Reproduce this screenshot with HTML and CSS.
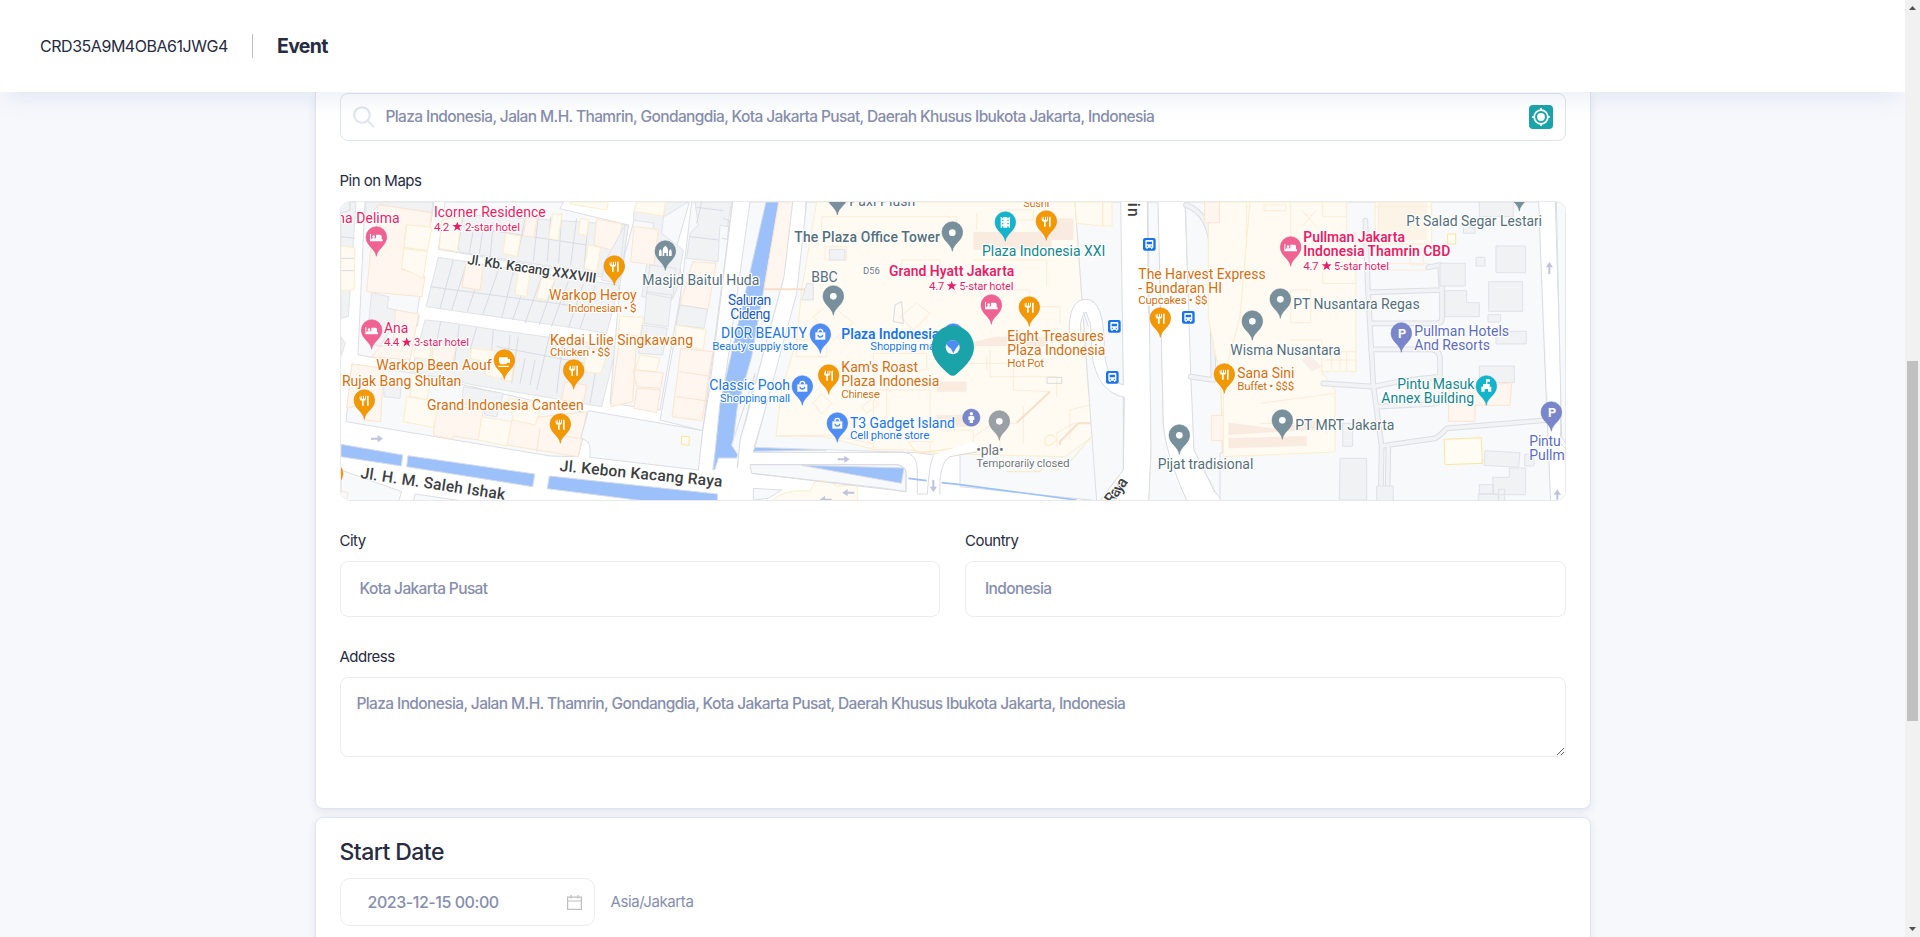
FILE: index.html
```html
<!DOCTYPE html>
<html lang="en">
<head>
<meta charset="utf-8">
<title>Event</title>
<link rel="stylesheet" href="styles.css">
</head>
<body>
<div class="page">
  <header class="topbar">
    <span class="code">CRD35A9M4OBA61JWG4</span>
    <span class="divider"></span>
    <h1 class="title">Event</h1>
  </header>
  <main class="content">
    <section class="card card-location">
      <div class="search">
        <svg class="search-icon" viewBox="0 0 22 22"><circle cx="9" cy="9" r="7.8"/><path d="M14.8 14.8L20.4 20.6"/></svg>
        <span class="value search-value">Plaza Indonesia, Jalan M.H. Thamrin, Gondangdia, Kota Jakarta Pusat, Daerah Khusus Ibukota Jakarta, Indonesia</span>
        <button class="locate" aria-label="Locate"><svg viewBox="0 0 24 24"><circle cx="12" cy="12" r="6.8"/><circle class="dot" cx="12" cy="12" r="3.9"/><path d="M12 3v3M12 18v3M3 12h3M18 12h3"/></svg></button>
      </div>
      <label class="label label-map">Pin on Maps</label>
      <div class="map">
<svg class="map-svg" viewBox="33 36 3672 894" preserveAspectRatio="none">
<defs>
  <path id="pin" d="M0 58C-3 34-31 27-31 0A31 31 0 1 1 31 0C31 27 3 34 0 58Z"/>
  <g id="food"><path d="M-14-15v9q0 6 6 6h1v15h5V0h1q6 0 6-6v-9h-3v9h-3v-9h-3v9h-4v-9h-3v9zM9-15q-1 0-1 3V15h5v-30z"/></g>
  <g id="bed"><path d="M-19-12h3V4h32v-9q0-5-5-5H-1V1h-13v8h-5zM16 4h3v6h-38V3z"/><circle cx="-8" cy="-4" r="4"/></g>
  <circle id="dot" r="10"/>
  <g id="bag"><path d="M-15-7h30v22h-30z"/><path class="bag-line" d="M-7-7v-2a7 7 0 0 1 14 0v2" stroke="#fff"/><path class="bag-line" d="M-7 0a7 7 0 0 0 14 0" stroke="#4f8df5"/></g>
  <g id="bus"><rect class="bus-bg" x="-19" y="-19" width="38" height="38" rx="6"/><path d="M-12-10q0-3 3-3H9q3 0 3 3V10H9v4H5v-4H-5v4h-4v-4h-3z"/><path class="bus-bg" d="M-8-8H8V0H-8zM-8 4h4v3h-4zM4 4h4v3H4z"/></g>
  <path id="star" d="M0-15L4-5 15-5 6 2 10 13 0 6-10 13-6 2-15-5-4-5Z"/>
  <path id="arrow" d="M-18-3H2v-8L18 0 2 11V3h-20z"/>
</defs>
<rect class="road" x="0" y="0" width="3800" height="960"/>

<!-- west quarter -->
<g>
  <path class="grey" d="M33 36H78L55 380 33 385zM33 440L46 460 33 500z"/>
  <path class="cream" d="M33 168L75 174 72 300 33 302z"/>
  <path class="edge" d="M33 205H73M33 242H70M33 140L76 145M33 70L60 60V36"/>
  <path class="land" d="M105 36H312L238 525 84 494z"/>
  <path class="grey" d="M108 36H310L304 68 145 44 105 100zM125 308L176 320 172 354 268 375 262 410 190 405 150 470 110 455z"/>
  <path class="peach" d="M145 44L304 68 300 125 228 112 216 238 285 260 276 320 110 305 125 150 138 120zM196 360L266 372 240 510 125 500 150 470 190 462z"/>
  <path class="cream" d="M230 104L306 112 292 182 222 172zM222 176L292 184 280 265 214 234z"/>
  <path class="land" d="M345 36H700L690 56 895 105 872 270 325 178z"/>
  <path class="grey" d="M345 70L895 105 872 262 390 186z"/>
  <path class="edge" d="M400 75L382 185M430 120L418 188M458 125L448 192M490 100L480 205M545 100L525 190M585 90L562 200M625 80L610 215M662 80L652 215M695 70L686 220M740 85L722 225M775 90L762 232M340 100L770 165"/>
  <path class="cream" d="M335 90L395 80 382 184 328 175zM528 130L572 138 562 200 518 190zM668 70L696 74 684 150 656 145zM752 85L776 90 770 136 745 132zM775 165L812 172 800 245 762 235zM720 36H835L830 60 720 42z"/>
  <path class="peach" d="M588 80L622 84 612 142 580 138zM800 88L875 100 866 186 792 165z"/>
  <path class="grey" d="M325 202L868 286 830 430 720 412 288 350z"/>
  <path class="edge" d="M370 210L330 355M410 220L365 360M458 230L412 365M505 240L458 375M550 245L515 385M595 255L548 390M635 260L585 400M675 270L628 405M715 275L664 410M760 282L716 412M795 288L750 415M300 290L840 362"/>
  <path class="cream" d="M565 245L600 250 590 320 555 312zM635 262L675 268 650 330 620 325z"/>
  <path class="peach" d="M408 218L460 228 450 300 396 292z"/>
  <path class="grey" d="M285 390L340 395 500 420 860 470 815 650 430 585 244 545z"/>
  <path class="edge" d="M332 395L305 530M388 405L370 540M440 412L420 480M490 420L480 540M540 435L530 560M565 440L545 580M585 505L570 580M615 510L600 585M660 430L620 600M700 440L680 610M740 520L700 620M780 460L760 560M810 470L780 640M500 470L820 530"/>
  <path class="cream" d="M262 445L305 450 298 510 250 500zM425 475L515 485 520 568 465 555 470 515 420 505zM770 475L835 485 812 550 760 545z"/>
  <path class="peach" d="M308 455L380 462 362 540 305 530zM705 575L770 585 760 640 695 630zM520 530L550 535 545 575 515 570z"/>
  <path class="land" d="M66 522L240 548 776 670 745 800 660 798 48 695z"/>
  <path class="peach" d="M66 522L160 535 152 695 102 690 104 640 50 655zM320 640L460 660 445 750 370 738 368 748 310 735zM545 690L770 665 745 800 530 765z"/>
  <path class="grey" d="M160 560L215 570 210 625 162 620zM400 590L520 610 500 680 465 675 460 655 395 640z"/>
  <path class="cream" d="M245 550L300 562 292 628 240 620zM230 620L330 635 310 712 220 695zM455 680L545 695 530 768 445 750zM535 625L635 640 615 705 550 690z"/>
  <path class="edge-warm" d="M630 715L620 785M700 640L690 735 745 745M560 650L600 660"/>
  <path class="grey" d="M885 105L865 280 815 270 822 220z"/>
  <path class="land" d="M775 662L1120 722 1106 840 780 802V775Q780 752 752 745z"/>
  <path class="land" d="M33 840L215 905 205 936H33zM255 912L420 936H250z"/>
  <path class="water" d="M33 763L218 795 214 828 33 800zM234 797L614 852 608 890 230 830zM658 858L1162 912V940H1000L652 896z"/>
  <path class="edge-warm" d="M33 903L54 908 50 936"/>
</g>

<!-- Cideng canal and the blocks beside it -->
<g transform="translate(930 0)">
  <path class="land" d="M-10 36H148L110 170 128 280 60 660-90 640-60 280-45 190-20 100z"/>
  <path class="grey" d="M-18 60L76 78 145 36H75L65 130 130 180 110 300 95 330 5 320 20 225 42 100-20 90z"/>
  <path class="cream" d="M-10 36H76L70 78-18 64zM-60 378L10 382 0 440-65 430zM0 495L60 505 48 545-15 540z"/>
  <path class="peach" d="M-18 110L55 118 42 225-28 215zM-60 435L-10 445-22 635-88 650zM-20 540L70 548 62 595-10 590zM-10 595L62 600 50 668-18 655z"/>
  <path class="grey" d="M30 225L108 235 98 325 20 310zM20 305L95 315 84 410 12 400zM8 405L82 415 68 495-5 490z"/>
  <path class="land" d="M155 36H278L188 722 60 690 110 415z"/>
  <path class="grey" d="M165 36H275L262 110 240 105 234 215 140 205 150 130 175 105z"/>
  <path class="edge" d="M170 52L250 62M150 140L236 150M185 36L170 100M250 85L268 92 262 148 245 145"/>
  <path class="peach" d="M158 215L228 220 204 358 120 345zM122 475L218 485 186 692 96 680 112 560z"/>
  <path class="edge-warm" d="M118 545L205 558M108 620L198 632"/>
  <path class="grey" d="M120 345L203 358 192 415 108 405z"/>
  <path class="cream" d="M108 405L198 420 190 478 106 465z"/>
  <path class="road" d="M278 36H380L245 722 220 845 172 838 208 600z"/>
  <path class="cream-y" d="M125 738L148 740 147 766 124 763z"/>
  <path class="edge" d="M278 36L208 600 188 722 175 840M334 36L218 840"/>
  <path class="land" d="M330 36H462L432 300 300 765 228 760z"/>
  <path class="water" d="M378 36H418L335 500 292 650 278 765 300 768 290 804H235L225 838 220 840 240 640z"/>
  <path class="land" d="M275 765L345 550 292 840 300 805z"/>
  <path class="peach" d="M416 36H470L435 297 372 298z"/>
  <path class="road" d="M458 36H530L475 300 343 770 340 785H790Q832 790 832 840V912H860L870 810 960 770V940H230L294 830 300 765 425 300z"/>
  <path class="edge" d="M458 36L432 260 300 750 292 833M498 36L482 300 343 770"/>
  <path class="land" d="M330 824H770Q798 828 798 850V905L720 893 335 850z"/>
  <path class="water" d="M485 826L792 834 784 880zM345 770L560 780 340 784z"/>
  <path class="land" d="M340 895L425 900 385 925 340 930z"/>
  <path class="cream" d="M390 936Q430 895 510 903L525 875Q560 865 590 888L652 885V936z"/>
</g>

<!-- Plaza Indonesia -->
<g transform="translate(930 0)">
  <path class="land" d="M500 36H1445L1452 880 1400 935 960 890V775L880 795 832 788 345 772 470 310z"/>
  <path class="cream" d="M530 36H1305L1345 600 1370 730 1275 800 1060 795 890 790 810 780 700 778 555 740 408 738 425 600 470 450 485 300z"/>
  <path class="peach-deep" d="M1000 126H1235V85H1300V150H1235V180H1000zM985 460L1065 440H1220V468H1010L980 520zM890 575H980V605H890zM890 675H985V710H890z"/>
  <path class="edge-peach" d="M545 80H950V130H545zM785 210H900V260H785zM555 170H620V210H555zM830 340L870 370 820 420 780 380zM520 380L570 340 640 400 580 450zM470 450H560V500H470zM700 490H860V540H700zM840 590H960M740 560V700M700 600H870V690H700zM520 640L545 610 575 640 545 672zM665 650L700 625 715 645 680 670zM410 738L560 735 700 760V778M1010 70V120M1080 60H1180V90H1080zM1000 210H1220V290M990 300H1170L1160 350H1260V400M1050 480V560H1250V620M980 520H1120V600L1230 605 1130 700H1060L1000 740M1250 770V730L1300 700H1340M1040 540V500M1150 650V760M1290 750V660L1370 640M905 720H1000V780M810 755H880M870 755V790M1080 710V790"/>
  <path class="edge-strong" d="M372 298H498M1260 765V755L1315 700H1365M1130 698L1230 605"/>
  <path class="edge-yellow" d="M1100 845H1200L1220 820 1250 840 1290 815 1355 740M805 755L830 790 940 775M1215 745Q1225 730 1240 738T1245 755Q1230 770 1215 765z"/>
  <path class="grey" d="M568 178H615V210H568zM500 280H520V330H485z"/>
  <path class="edge" d="M765 345L785 335 790 400 760 395zM1221 562H1265V580H1221z"/>
  <path class="road" d="M880 795Q860 820 862 912L900 915Q895 820 950 795L1010 780 1005 755 940 775z"/>
  <path class="edge" d="M880 797Q868 820 862 912H832V840Q832 790 790 787H340M900 915Q895 820 930 800L1015 785M330 824H770Q798 828 798 850V905L335 850"/>
  <path class="stream" d="M805 865L860 872M905 878L960 884 1310 930"/>
</g>

<!-- Thamrin boulevard and the roundabout spur -->
<g transform="translate(1860 0)">
  <path class="land" d="M375 36H520V935H440z"/>
  <path class="cream" d="M375 36H458V108L380 100zM458 36H486V108H458z"/>
  <path class="road" d="M510 36H592L592 360 605 480 600 700 603 790 595 936H450L520 840 523 622Q430 600 422 480L408 366 392 405V440L360 430Q355 325 410 328 462 330 465 470 470 575 520 585z"/>
  <path class="edge" d="M512 36L520 585Q465 570 463 470 462 330 410 328 355 325 358 430M400 366L415 410M392 460V400Q400 366 408 366L422 405 425 490Q440 605 523 622L520 840 450 932M592 36L595 360 607 440 603 790 597 936"/>
  <path class="land" d="M594 36H626L640 700 665 800 720 936H596L603 790z"/>
  <path class="road" d="M624 36H705L722 550 732 780 795 908 900 936H714L658 830 640 700z"/>
  <path class="edge" d="M624 36L640 700Q645 790 712 935M705 36L725 560 732 780 795 908 900 935"/>
  <path class="land" d="M706 36H770L810 430 820 936 795 905 732 780 722 550z"/>
  <path class="lane" d="M708 45Q780 70 785 180L790 570 722 560"/>
  <path class="lane-in" d="M708 45Q780 70 785 180L790 570 722 560"/>
  <path class="cream" d="M778 36H1225V390H1218V510L1060 570 1010 585V780L960 796H820L812 570 775 385V130z"/>
  <path class="peach" d="M764 36H808V98H764zM785 676H826V752H785z"/>
  <path class="edge-peach" d="M890 36V148H930M930 260V350M892 550V675H930M845 795H950M905 700H960V750"/>
</g>

<!-- east quarter -->
<g transform="translate(2790 0)">
  <path class="land" d="M0 36H846L875 936H-120V790L0 740z"/>
  <path class="cream" d="M-30 36H260V130H288V545H185L225 600V786L-110 800V570L-60 380z"/>
  <path class="cream" d="M345 36H515V162H345z"/>
  <path class="edge-peach" d="M12 45H78V62H12zM92 36V210M92 300H152V398H92zM188 36V80H258M188 210V280H288M90 450H185L185 545M125 60L170 110M125 110L170 60M195 485H288M195 510H288M215 485V540M240 485V540M260 485V540M0 640L225 610M0 700H200V730M355 36V160M345 50H515M375 220H505V240H375zM450 195H490V225H450z"/>
  <path class="fade" d="M355 36H500V150H355z"/>
  <path class="peach-deep" d="M-95 745L140 738V768L-95 775zM-95 698L40 715 180 690V718L-95 735z"/>
  <path class="facet" d="M125 510L150 495 185 530 155 545z"/>
  <path class="lane" d="M316 92L324 300 340 585 365 770M324 307L545 300 540 225 505 232M330 400H530Q546 400 546 385V290M332 478H515Q540 480 540 510V560L430 572 340 590 190 580M350 650L520 642Q545 638 545 615M365 768L525 745Q540 738 560 715L865 690M365 765L362 936M385 775L382 936"/>
  <path class="lane-in" d="M316 92L324 300 340 585 365 770M324 307L545 300 540 225 505 232M330 400H530Q546 400 546 385V290M332 478H515Q540 480 540 510V560L430 572 340 590 190 580M350 650L520 642Q545 638 545 615M365 768L525 745Q540 738 560 715L865 690M365 765L362 936M385 775L382 936"/>
  <path class="grey" d="M658 36H760V80H658zM540 220H616V288H540zM555 302H620V338H658V380H555zM648 202H675V228H648zM708 168H797V248H708zM686 275H788V364H686zM684 374H722V396H684zM708 424H799V462H708zM658 528H763V578H658zM610 110H645V130H610zM248 700H278V769H248zM240 805H320V930H238zM675 782L780 788 776 832 672 826zM748 834H797V914H700L698 862H748zM658 884H700V912H658zM655 912H716V936H655zM716 898H734V936H716zM794 793H822V828H794zM350 888H400V936H350z"/>
  <path class="cream-y" d="M563 132H587V162H563zM552 748L664 743 667 820 555 824z"/>
  <path class="peach" d="M568 600L755 578 750 646H645V694H565z"/>
  <path class="road" d="M836 36H886L900 400 915 850V936H872L862 600z"/>
  <path class="edge" d="M836 36L856 560 872 936M886 36L902 560V760L915 775"/>
  <path class="land" d="M889 36H925V775L905 740z"/>
</g>

<!-- one-way arrows -->
<g class="arrows">
  <use href="#arrow" x="141" y="746"/><use href="#arrow" x="1541" y="808"/>
  <use href="#arrow" transform="translate(1555 908) rotate(180)"/><use href="#arrow" transform="translate(1810 888) rotate(90)"/>
  <use href="#arrow" transform="translate(3658 234) rotate(-90)"/><use href="#arrow" transform="translate(3682 916) rotate(-90)"/>
  <use href="#arrow" transform="translate(1487 929) rotate(180)"/>
</g>

<!-- place pins -->
<g class="p-orange">
  <use href="#pin" x="853" y="228"/><use href="#pin" x="523" y="510"/><use href="#pin" x="731" y="540"/><use href="#pin" x="103" y="630"/><use href="#pin" x="691" y="702"/><use href="#pin" x="8" y="850"/>
  <use href="#pin" x="1496" y="555"/><use href="#pin" x="2149" y="93"/><use href="#pin" x="2098" y="351"/><use href="#pin" x="2491" y="384"/><use href="#pin" x="2683" y="552"/>
</g>
<g class="p-pink"><use href="#pin" x="139" y="141"/><use href="#pin" x="125" y="420"/><use href="#pin" x="1984" y="345"/><use href="#pin" x="2882" y="171"/></g>
<g class="p-slate"><use href="#pin" x="1006" y="183"/><use href="#pin" x="1510" y="318"/><use href="#pin" x="1867" y="126"/><use href="#pin" x="1522" y="17"/><use href="#pin" x="2767" y="393"/><use href="#pin" x="2548" y="735"/><use href="#pin" x="2851" y="327"/><use href="#pin" x="2857" y="690"/><use href="#pin" x="3568" y="5"/></g>
<g class="p-blue"><use href="#pin" x="1471" y="432"/><use href="#pin" x="1417" y="588"/><use href="#pin" x="1522" y="699"/><use href="#pin" x="1870" y="432"/></g>
<g class="p-teal"><use href="#pin" x="2026" y="96"/><use href="#pin" x="3469" y="588"/></g>
<g class="p-indigo"><use href="#pin" x="3214" y="429"/><use href="#pin" x="3664" y="666"/><circle cx="1924" cy="683" r="26"/></g>
<use class="p-grey" href="#pin" x="2008" y="693"/>
<g class="glyph">
  <use href="#food" x="853" y="230"/><use href="#food" x="731" y="542"/><use href="#food" x="103" y="632"/><use href="#food" x="691" y="704"/><use href="#food" x="1496" y="557"/><use href="#food" x="2149" y="95"/><use href="#food" x="2098" y="353"/><use href="#food" x="2491" y="386"/><use href="#food" x="2683" y="554"/>
  <use href="#bed" x="139" y="144"/><use href="#bed" x="125" y="423"/><use href="#bed" x="1984" y="348"/><use href="#bed" x="2882" y="174"/>
  <use href="#dot" x="1510" y="319"/><use href="#dot" x="1867" y="128"/><use href="#dot" x="2767" y="394"/><use href="#dot" x="2548" y="736"/><use href="#dot" x="2851" y="328"/><use href="#dot" x="2857" y="691"/><use href="#dot" x="2008" y="694"/>
  <use href="#bag" x="1471" y="434"/><use href="#bag" x="1417" y="590"/><use href="#bag" x="1522" y="701"/>
  <path d="M507 502H533V507H540V518H533Q530 523 520 523 507 523 507 512zM505 527H536V531H505z"/>
  <path d="M987 198V183L991 177 995 183V198zM998 198V180Q998 173 1006 167 1014 173 1014 180V198H1009V189H1003V198zM1017 198V183L1021 177 1025 183V198z"/>
  <path fill-rule="evenodd" d="M2012 81H2016V85H2020V81H2032V85H2036V81H2040V113H2036V109H2032V113H2020V109H2016V113H2012zM2016 89V93H2020V89zM2016 99V103H2020V99zM2032 89V93H2036V89zM2032 99V103H2036V99z"/>
  <path d="M3468 568H3480V575H3472V582H3479V590H3484V605H3474V597H3464V605H3454V590H3459V582H3468z"/>
  <circle cx="1924" cy="671" r="5"/><path d="M1915 680Q1924 674 1933 680V690H1929V699H1919V690H1915z"/>
</g>
<g class="glyph"><use href="#bus" x="2458" y="163"/><use href="#bus" x="2353" y="409"/><use href="#bus" x="2347" y="562"/><use href="#bus" x="2575" y="382"/></g>
<g class="parking"><text x="3204" y="444">P</text><text x="3654" y="681">P</text></g>

<!-- labels -->
<g class="lbl pink">
  <text x="22" y="98" textLength="187">na Delima</text>
  <text x="312" y="81" textLength="335">Icorner Residence</text>
  <text x="162" y="429" textLength="73">Ana</text>
  <text class="sub" x="312" y="123" textLength="46">4.2</text><text class="sub" x="405" y="123" textLength="165">2-star hotel</text>
  <text class="sub" x="162" y="468" textLength="46">4.4</text><text class="sub" x="252" y="468" textLength="165">3-star hotel</text>
  <text class="bold" x="1677" y="258" textLength="376">Grand Hyatt Jakarta</text>
  <text class="sub" x="1797" y="300" textLength="46">4.7</text><text class="sub" x="1888" y="300" textLength="163">5-star hotel</text>
  <text class="bold" x="2920" y="156" textLength="305">Pullman Jakarta</text>
  <text class="bold" x="2920" y="198" textLength="441">Indonesia Thamrin CBD</text>
  <text class="sub" x="2920" y="240" textLength="46">4.7</text><text class="sub" x="3012" y="240" textLength="165">5-star hotel</text>
  <use href="#star" x="382" y="110"/><use href="#star" x="230" y="457"/><use href="#star" x="1865" y="288"/><use href="#star" x="2990" y="228"/>
</g>
<g class="lbl orange">
  <text x="657" y="330" textLength="263">Warkop Heroy</text><text class="sub" x="715" y="366" textLength="205">Indonesian • $</text>
  <text x="660" y="465" textLength="429">Kedai Lilie Singkawang</text><text class="sub" x="660" y="497" textLength="181">Chicken • $$</text>
  <text x="139" y="540" textLength="346">Warkop Been Aouf</text>
  <text x="36" y="588" textLength="358">Rujak Bang Shultan</text>
  <text x="291" y="660" textLength="470">Grand Indonesia Canteen</text>
  <text x="1534" y="546" textLength="230">Kam's Roast</text><text x="1534" y="588" textLength="294">Plaza Indonesia</text><text class="sub" x="1534" y="624" textLength="116">Chinese</text>
  <text class="sub" x="2080" y="51" textLength="78">Sushi</text>
  <text x="2032" y="453" textLength="290">Eight Treasures</text><text x="2032" y="495" textLength="294">Plaza Indonesia</text><text class="sub" x="2032" y="531" textLength="110">Hot Pot</text>
  <text x="2425" y="267" textLength="382">The Harvest Express</text><text x="2425" y="309" textLength="251">- Bundaran HI</text><text class="sub" x="2425" y="342" textLength="208">Cupcakes • $$</text>
  <text x="2722" y="564" textLength="171">Sana Sini</text><text class="sub" x="2722" y="600" textLength="171">Buffet • $$$</text>
</g>
<g class="lbl slate">
  <text x="937" y="285" textLength="351">Masjid Baitul Huda</text>
  <text x="1444" y="276" textLength="79">BBC</text>
  <text x="1558" y="48" textLength="198">Paxi Plush</text>
  <text class="medium" x="1393" y="156" textLength="437">The Plaza Office Tower</text>
  <text class="sub small grey-txt" x="1599" y="252" textLength="51">D56</text>
  <text x="2701" y="495" textLength="331">Wisma Nusantara</text>
  <text x="2483" y="837" textLength="287">Pijat tradisional</text>
  <text x="3229" y="108" textLength="407">Pt Salad Segar Lestari</text>
  <text x="2890" y="357" textLength="379">PT Nusantara Regas</text>
  <text x="2896" y="720" textLength="297">PT MRT Jakarta</text>
  <text class="grey-txt" x="1939" y="795" textLength="82">•pla•</text><text class="sub grey-txt" x="1939" y="831" textLength="280">Temporarily closed</text>
</g>
<g class="lbl blue">
  <text class="water-txt" x="1194" y="345" textLength="130">Saluran</text><text class="water-txt" x="1201" y="387" textLength="120">Cideng</text>
  <text x="1173" y="444" textLength="258">DIOR BEAUTY</text><text class="sub" x="1147" y="480" textLength="287">Beauty supply store</text>
  <text x="1138" y="600" textLength="242">Classic Pooh</text><text class="sub" x="1170" y="636" textLength="210">Shopping mall</text>
  <text class="bold" x="1534" y="447" textLength="294">Plaza Indonesia</text><text class="sub" x="1621" y="480" textLength="210">Shopping mall</text>
  <text x="1560" y="714" textLength="315">T3 Gadget Island</text><text class="sub" x="1560" y="747" textLength="238">Cell phone store</text>
</g>
<g class="lbl teal"><text x="1956" y="198" textLength="370">Plaza Indonesia XXI</text><text x="3202" y="597" textLength="231">Pintu Masuk</text><text x="3154" y="639" textLength="278">Annex Building</text></g>
<g class="lbl indigo"><text x="3253" y="438" textLength="284">Pullman Hotels</text><text x="3253" y="480" textLength="227">And Resorts</text><text x="3598" y="768" textLength="94">Pintu</text><text x="3598" y="810" textLength="106">Pullm</text></g>
<g class="lbl street">
  <text transform="translate(411 222) rotate(8.3)" class="street-sm" textLength="390">Jl. Kb. Kacang XXXVIII</text>
  <text transform="translate(90 864) rotate(8.6)" textLength="438">Jl. H. M. Saleh Ishak</text>
  <text transform="translate(688 843) rotate(5.6)" textLength="490">Jl. Kebon Kacang Raya</text>
  <text transform="translate(2394 18) rotate(90)" textLength="62">rin</text>
  <text transform="translate(2347 944) rotate(-55)" textLength="84">Raya</text>
  <text transform="translate(2685 963) rotate(20)" textLength="40">Jl.</text>
</g>

<!-- event marker -->
<g><path class="marker" d="M1868 407C1832 407 1805 436 1805 472 1805 508 1835 533 1857 553Q1868 562 1879 553C1901 533 1932 508 1932 472 1932 436 1904 407 1868 407z"/><circle class="marker-hole" cx="1868" cy="472" r="21"/><path class="marker-blue" d="M1849 463Q1853 451 1868 451T1887 463Q1884 470 1877 476L1870 490 1863 476Q1854 471 1849 463z"/></g>
</svg>
      </div>
      <div class="row">
        <div class="field"><label class="label">City</label><div class="input value">Kota Jakarta Pusat</div></div>
        <div class="field"><label class="label">Country</label><div class="input value">Indonesia</div></div>
      </div>
      <div class="field field-address"><label class="label">Address</label><textarea class="area value">Plaza Indonesia, Jalan M.H. Thamrin, Gondangdia, Kota Jakarta Pusat, Daerah Khusus Ibukota Jakarta, Indonesia</textarea></div>
    </section>
    <section class="card card-date">
      <h2 class="heading">Start Date</h2>
      <div class="date-row">
        <div class="date value"><span class="date-text">2023-12-15 00:00</span>
          <svg class="cal" viewBox="0 0 15 15"><path d="M.6 2.1h13.8v12.3H.6zM.6 6h13.8M4.1 0v3.6M10.9 0v3.6"/></svg></div>
        <span class="zone">Asia/Jakarta</span>
      </div>
    </section>
  </main>
</div>
<div class="scrollbar"><svg class="sb-arrow" viewBox="0 0 7 4"><path d="M0 4L3.5 0 7 4z"/></svg><div class="thumb"></div><svg class="sb-arrow" viewBox="0 0 7 4"><path d="M0 0H7L3.5 4z"/></svg></div>
</body>
</html>
```
FILE: styles.css
```css
* { box-sizing: border-box; }
body { margin: 0; height: 937px; display: flex; overflow: hidden; background: #f6f8fc; font-family: Inter, "Liberation Sans", sans-serif; font-size: 16px; color: #272b41; }
.page { width: 1905px; height: 937px; overflow: hidden; display: flex; flex-direction: column; }
.topbar { position: relative; z-index: 2; height: 92px; flex: none; background: #fff; padding: 0 40px; display: flex; align-items: center; box-shadow: 0 12px 22px -6px rgba(100, 120, 175, .13); }
.code { width: 188px; font-size: 16px; letter-spacing: -.46px; white-space: nowrap; }
.divider { width: 1px; height: 24px; margin: 0 24px; background: #b9bccf; }
.title { margin: 0; font-size: 19.5px; font-weight: 700; letter-spacing: -.7px; }
.content { flex: 1; display: flex; flex-direction: column; align-items: center; gap: 8px; min-height: 0; }
.card { width: 1276px; flex: none; background: #fff; border: 1px solid #dfe4f0; border-radius: 8px; padding: 0 24px; box-shadow: 0 3px 9px rgba(40, 45, 75, .09); }
.card-location { height: 717px; border-top: 0; border-radius: 0 0 8px 8px; padding-top: 1px; }
.search { height: 48px; border: 1px solid #dfe4f0; border-radius: 8px; display: flex; align-items: center; padding: 0 12px 0 12px; }
.search-icon { width: 22px; height: 22px; margin-right: 11px; fill: none; stroke: #dfe4f0; stroke-width: 2; stroke-linecap: round; }
.search-value { flex: 1; padding-bottom: 1px; }
.value { color: #868eab; font-size: 15.5px; font-weight: 500; letter-spacing: -.62px; white-space: nowrap; }
.locate { width: 24px; height: 24px; padding: 0; border: 0; border-radius: 4px; background: #1aa3a9; display: block; }
.locate svg { display: block; fill: none; stroke: #fff; stroke-width: 1.7; }
.locate .dot { fill: #fff; stroke: none; }
.label { display: block; height: 20px; line-height: 20px; font-size: 15px; letter-spacing: -.5px; }
.label-map { margin: 30px 0 10px; }
.map { height: 300px; border: 1px solid #e9e9ec; border-radius: 10px; overflow: hidden; }
.map-svg { display: block; width: 100%; height: 100%; }
.row { display: grid; grid-template-columns: 1fr 1fr; gap: 25px; margin-top: 30px; }
.field { display: flex; flex-direction: column; gap: 10px; }
.input { height: 56px; border: 1px solid #ececee; border-radius: 8px; padding: 0 19px; line-height: 53px; }
.field-address { margin-top: 30px; }
.area { display: block; width: 100%; height: 80px; margin: 0; border: 1px solid #ececee; border-radius: 8px; padding: 15px 16px; line-height: 22px; font-family: inherit; outline: 0; background: #fff; }
.card-date { height: 200px; padding-top: 19px; }
.heading { margin: 0; height: 30px; line-height: 30px; font-size: 23px; font-weight: 500; letter-spacing: -.55px; }
.date-row { display: flex; align-items: center; gap: 16px; margin-top: 11px; }
.date { width: 255px; height: 48px; border: 1px solid #ececee; border-radius: 10px; padding: 0 12px 0 27px; display: flex; align-items: center; justify-content: space-between; }
.date-text { font-size: 16px; letter-spacing: -.45px; padding-bottom: 1px; }
.cal { width: 15px; height: 15px; fill: none; stroke: #bfbfbf; stroke-width: 1.2; }
.zone { color: #868eab; font-size: 15px; letter-spacing: -.4px; padding-bottom: 1px; }
.scrollbar { width: 15px; height: 937px; background: #f1f1f1; display: flex; flex-direction: column; align-items: center; padding: 6px 0; }
.sb-arrow { width: 7px; height: 4px; fill: #505050; }
.thumb { width: 11px; height: 360px; margin: 351px 0 auto; background: #c1c1c1; }

.road { fill: #fff; }
.land { fill: #f7f9fb; stroke: #dcdee3; stroke-width: 3; }
.grey { fill: #f1f2f4; stroke: #dcdee3; stroke-width: 2.5; }
.cream { fill: #fffaf2; stroke: #fcedcc; stroke-width: 3; }
.cream-y { fill: #fffcf3; stroke: #fde49b; stroke-width: 3; }
.peach { fill: #fff6ef; stroke: #fde4cf; stroke-width: 3; }
.peach-deep { fill: #f9ebe0; }
.fade { fill: #fbeedd; opacity: .5; }
.facet { fill: #f8f0e8; }
.edge { fill: none; stroke: #d9dbe1; stroke-width: 3; }
.edge-warm { fill: none; stroke: #fde4cf; stroke-width: 3; }
.edge-peach { fill: none; stroke: #fdecd8; stroke-width: 3; }
.edge-strong { fill: none; stroke: #f8dfca; stroke-width: 6; }
.edge-yellow { fill: none; stroke: #fde9bd; stroke-width: 3; }
.water { fill: #9cc0f9; stroke: #d3dbe8; stroke-width: 3; }
.stream { fill: none; stroke: #9cc0f9; stroke-width: 5; }
.lane { fill: none; stroke: #dcdee3; stroke-width: 17; stroke-linejoin: round; stroke-linecap: round; }
.lane-in { fill: none; stroke: #f1f3f5; stroke-width: 11; stroke-linejoin: round; stroke-linecap: round; }
.arrows { fill: #bfc4da; }
.p-orange { fill: #f29900; stroke: #e37c00; stroke-width: 1.5; }
.p-pink { fill: #f06292; stroke: #e34b80; stroke-width: 1.5; }
.p-slate { fill: #78909c; stroke: #607d8b; stroke-width: 1.5; }
.p-blue { fill: #4f8df5; stroke: #3b78e7; stroke-width: 1.5; }
.p-teal { fill: #12b5cb; stroke: #129eaf; stroke-width: 1.5; }
.p-indigo { fill: #7986cb; stroke: #6572bd; stroke-width: 1.5; }
.p-grey { fill: #9aa0a6; stroke: #80868b; stroke-width: 1.5; }
.glyph { fill: #fff; }
.bag-line { fill: none; stroke-width: 4; }
.bus-bg { fill: #1a73e8; }
.parking { fill: #fff; font: 700 38px Roboto, sans-serif; }
.lbl { font-family: Roboto, sans-serif; font-size: 42px; stroke: #fff; stroke-width: 7; stroke-linejoin: round; paint-order: stroke; }
.lbl .sub { font-size: 35px; }
.lbl .small { font-size: 29px; }
.lbl .medium { font-weight: 500; }
.lbl .bold { font-weight: 600; }
.pink { fill: #e91e63; }
.orange { fill: #d56e0c; }
.slate { fill: #546e7a; }
.grey-txt { fill: #70757a; }
.blue { fill: #1a73e8; }
.water-txt { fill: #185abc; }
.teal { fill: #12858e; }
.indigo { fill: #5c6bc0; }
.street { fill: #3c4043; font-size: 47px; font-weight: 500; }
.lbl .street-sm { font-size: 41px; }
.marker { fill: #1aa3a9; }
.marker-hole { fill: #f5f7fa; }
.marker-blue { fill: #4f8df5; }
```
